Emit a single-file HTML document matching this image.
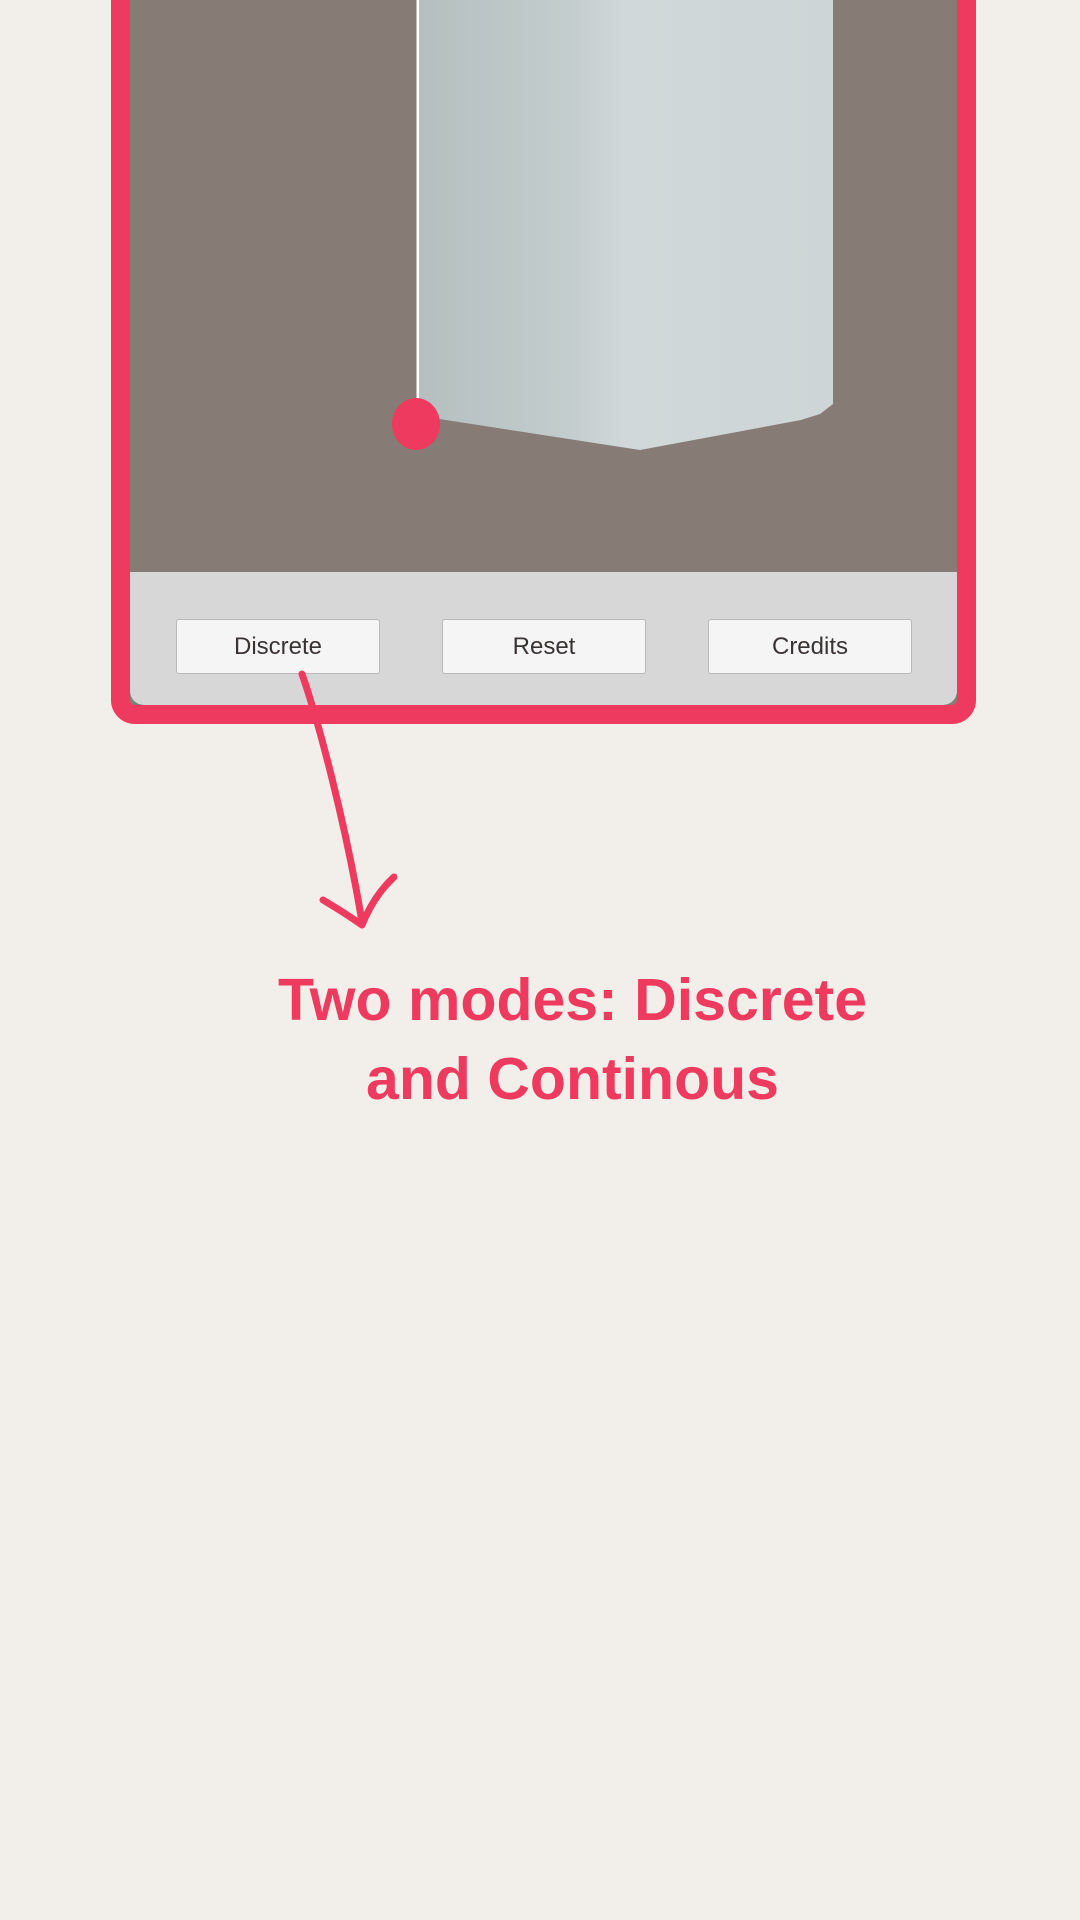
<!DOCTYPE html>
<html><head><meta charset="utf-8"><style>
html,body{margin:0;padding:0;}
body{width:1080px;height:1920px;background:#f2efea;position:relative;overflow:hidden;font-family:"Liberation Sans",sans-serif;}
.frame{position:absolute;left:111px;top:-40px;width:865px;height:764px;box-sizing:border-box;border:19px solid #ee3a5e;border-radius:24px;background:#877c75;overflow:hidden;}
.panel{position:absolute;left:0;right:0;top:593px;bottom:0;background:#d7d7d7;border-radius:0 0 14px 14px;}
.btn{position:absolute;top:47px;height:55px;width:204px;background:#f5f5f5;border:1px solid #b9b9b9;border-radius:3px;box-sizing:border-box;text-align:center;line-height:54px;font-size:24px;color:#3a3333;}
.t{position:absolute;left:0;width:1145px;text-align:center;color:#ee3a5e;font-weight:bold;font-size:59px;}
</style></head><body>
<div class="frame">
<svg width="827" height="612" style="position:absolute;left:0;top:0">
<defs><linearGradient id="g" x1="0" x2="1"><stop offset="0" stop-color="#b5bfc0"/><stop offset="0.35" stop-color="#c3cccd"/><stop offset="0.5" stop-color="#d0d8d9"/><stop offset="1" stop-color="#cdd5d6"/></linearGradient></defs>
<polygon points="290,0 703,0 703,425 690,435 671,441 510,471 290,437" fill="url(#g)"/>
<line x1="288" y1="0" x2="288" y2="430" stroke="#fff" stroke-width="3"/>
<ellipse cx="286" cy="445" rx="24" ry="26" fill="#ee3a5e"/>
</svg>
<div class="panel">
<div class="btn" style="left:46px">Discrete</div>
<div class="btn" style="left:312px">Reset</div>
<div class="btn" style="left:578px">Credits</div>
</div>
</div>
<svg width="1080" height="1920" style="position:absolute;left:0;top:0">
<path d="M302,674 C318,720 345,820 362,922" fill="none" stroke="#ee3a5e" stroke-width="7" stroke-linecap="round"/>
<path d="M323,900 C340,910 352,918 362,925 C370,905 380,890 394,877" fill="none" stroke="#ee3a5e" stroke-width="7" stroke-linecap="round" stroke-linejoin="round"/>
</svg>
<div class="t" style="top:966px">Two modes: Discrete</div>
<div class="t" style="top:1045px">and Continous</div>
</body></html>
